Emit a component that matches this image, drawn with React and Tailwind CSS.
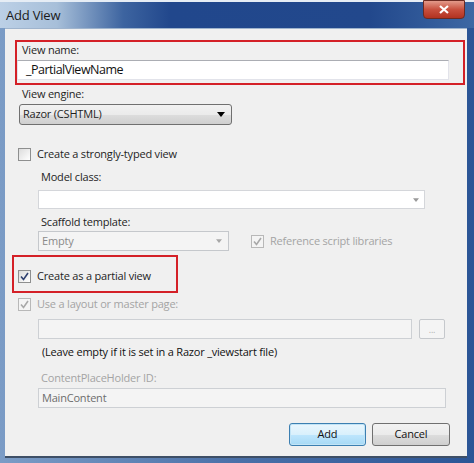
import React from "react";

const font = { fontFamily: '"Open Sans", "Noto Sans", sans-serif' };

const Check = ({ checked, disabled }) => (
  <span
    className={`flex items-center justify-center w-[13px] h-[13px] border shrink-0 ${
      disabled
        ? "border-[#b8b8b8] bg-[#f4f4f4]"
        : "border-[#8e8f8f] bg-[linear-gradient(135deg,#dcdcdc,#ffffff)]"
    }`}
  >
    {checked && (
      <svg width="9" height="9" viewBox="0 0 9 9">
        <path
          d="M1 4.5 L3.5 7.5 L8 1"
          fill="none"
          stroke={disabled ? "#a8a8a8" : "#2f4170"}
          strokeWidth="1.6"
        />
      </svg>
    )}
  </span>
);

const Arrow = ({ color = "#000", small }) => (
  <svg width={small ? "6" : "8"} height={small ? "4" : "5"} viewBox="0 0 8 5">
    <path d="M0 0 H8 L4 5 Z" fill={color} />
  </svg>
);

const App = () => {
  return (
    <div
      className="w-[474px] h-[463px] flex flex-col bg-[linear-gradient(90deg,#7b9cc6,#4a70a8_50%,#2b5596)] overflow-hidden"
      style={font}
    >
      {/* title bar */}
      <div className="relative h-[28px] shrink-0 border-t-2 border-[#e6edf5] bg-[linear-gradient(90deg,#bcd0e6_0%,#a7bfd9_12%,#3d64a0_26%,#21478c_36%,#22488c_78%,#3d68a4_100%)]">
        <span className="absolute left-[6px] top-[4px] text-[13px] tracking-[-0.2px] text-[#1a1a1a]">
          Add View
        </span>
        <div className="absolute left-[423px] top-[-2px] w-[42px] h-[19px] rounded-b-[4px] border border-[#6b2a22] bg-[linear-gradient(180deg,#e39a8a,#c8503e_50%,#b23220)] flex items-center justify-center">
          <svg width="10" height="9" viewBox="0 0 10 9">
            <path d="M1 1 L9 8 M9 1 L1 8" stroke="#fff" strokeWidth="2.2" />
          </svg>
        </div>
      </div>

      {/* client area */}
      <div className="ml-[5px] w-[462px] h-[430px] bg-[#f0f0f0] border-t border-b-2 border-t-[#9fb4cd] border-b-[#3e4f66] flex flex-col text-[11px] tracking-[-0.2px] text-[#1e1e1e]">
        {/* view name */}
        <div className="ml-[10px] mr-[2px] mt-[11px] h-[45px] border-2 border-[#d42027] flex flex-col">
          <div className="ml-[5px] h-[15px] leading-[15px]">View name:</div>
          <div className="mt-[3px] w-[432px] h-[20px] bg-white border border-[#e2e3ea] border-t-[#abadb3] flex items-center pl-[8px] text-[12.5px] tracking-[-0.5px] text-[#111]">
            _PartialViewName
          </div>
        </div>

        <div className="ml-[17px] mt-[1px] h-[15px] leading-[15px]">View engine:</div>
        <div className="ml-[14px] mt-[3px] w-[213px] h-[21px] rounded-[3px] border border-[#707070] bg-[linear-gradient(180deg,#f2f2f2,#ebebeb_50%,#dddddd_51%,#cfcfcf)] flex items-center justify-between pl-[3px] pr-[6px]">
          <span>Razor (CSHTML)</span>
          <Arrow />
        </div>

        <div className="ml-[13px] mt-[22px] h-[15px] flex items-center gap-[6px]">
          <Check />
          <span>Create a strongly-typed view</span>
        </div>

        <div className="ml-[36px] mt-[7px] h-[15px] leading-[15px]">Model class:</div>
        <div className="ml-[33px] mt-[6px] w-[387px] h-[19px] bg-white border border-[#d4d6da] flex items-center justify-end pr-[5px]">
          <Arrow color="#9a9a9a" small />
        </div>

        <div className="ml-[36px] mt-[5px] h-[15px] leading-[15px]">Scaffold template:</div>
        <div className="ml-[33px] mt-[2px] h-[20px] flex items-center">
          <div className="w-[191px] h-[20px] bg-[#f4f4f4] border border-[#c5c8cc] flex items-center justify-between pl-[3px] pr-[6px] text-[#8a8a8a]">
            <span>Empty</span>
            <Arrow color="#a8a8a8" small />
          </div>
          <div className="ml-[22px] flex items-center gap-[6px] text-[#a4a4a4]">
            <Check checked disabled />
            <span>Reference script libraries</span>
          </div>
        </div>

        {/* partial view */}
        <div className="ml-[7px] mt-[4px] w-[166px] h-[38px] border-2 border-[#d42027] flex items-end pb-[7px] pl-[4px]">
          <div className="h-[15px] flex items-center gap-[6px]">
            <Check checked />
            <span>Create as a partial view</span>
          </div>
        </div>

        <div className="ml-[13px] mt-[4px] h-[15px] flex items-center gap-[6px] text-[#a4a4a4]">
          <Check checked disabled />
          <span>Use a layout or master page:</span>
        </div>

        <div className="ml-[33px] mt-[7px] h-[20px] flex items-center">
          <div className="w-[374px] h-[20px] bg-[#f4f4f4] border border-[#cdd0d4]" />
          <div className="ml-[7px] w-[26px] h-[20px] rounded-[2px] bg-[#f4f4f4] border border-[#c5c8cc] flex items-center justify-center text-[#b0b0b0] text-[9px] leading-none">
            ...
          </div>
        </div>

        <div className="ml-[37px] mt-[5px] h-[15px] leading-[15px] text-[#111]">
          (Leave empty if it is set in a Razor _viewstart file)
        </div>

        <div className="ml-[36px] mt-[11px] h-[15px] leading-[15px] text-[#a4a4a4]">
          ContentPlaceHolder ID:
        </div>
        <div className="ml-[33px] mt-[3px] w-[408px] h-[20px] bg-[#f4f4f4] border border-[#cdd0d4] flex items-center pl-[3px] text-[#6d6d6d]">
          MainContent
        </div>

        <div className="mt-[15px] mr-[17px] flex justify-end gap-[6px]">
          <button className="w-[77px] h-[23px] rounded-[3px] border border-[#3c7fb1] bg-[linear-gradient(180deg,#eaf6fd,#d9f0fc_50%,#bee6fd_51%,#a7d9f5)] shadow-[inset_0_0_0_1px_#c2e4f6] text-[#111] text-[11px]">
            Add
          </button>
          <button className="w-[78px] h-[23px] rounded-[3px] border border-[#707070] bg-[linear-gradient(180deg,#f2f2f2,#ebebeb_50%,#dddddd_51%,#cfcfcf)] text-[#111] text-[11px]">
            Cancel
          </button>
        </div>
      </div>
    </div>
  );
};

export default App;
